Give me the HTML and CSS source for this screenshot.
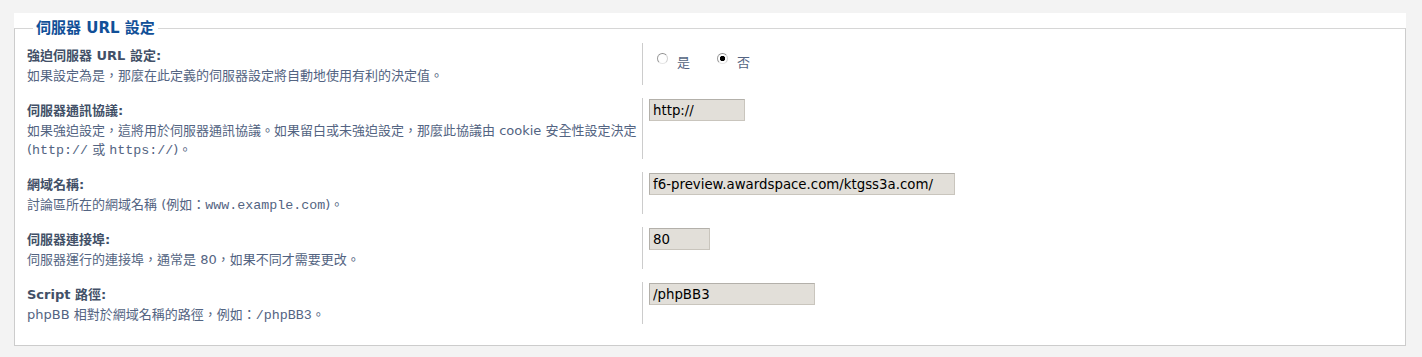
FILE: index.html
```html
<!DOCTYPE html>
<html lang="zh-TW">
<head>
    <meta charset="UTF-8">
    <title>伺服器 URL 設定</title>
    <link rel="stylesheet" href="styles.css">
</head>
<body>
    <div class="panel">
        <fieldset>
            <legend>伺服器 URL 設定</legend>

            <dl>
                <dt>
                    <label>強迫伺服器 URL 設定:</label>
                    <span class="explain">如果設定為是，那麼在此定義的伺服器設定將自動地使用有利的決定值。</span>
                </dt>
                <dd>
                    <div class="radios">
                        <label class="opt"><input type="radio" name="force_server_vars" value="1"><span>是</span></label>
                        <label class="opt"><input type="radio" name="force_server_vars" value="0" checked><span>否</span></label>
                    </div>
                </dd>
            </dl>

            <dl>
                <dt>
                    <label>伺服器通訊協議:</label>
                    <span class="explain">如果強迫設定，這將用於伺服器通訊協議。如果留白或未強迫設定，那麼此協議由 cookie 安全性設定決定 (<code>http://</code> 或 <code>https://</code>)。</span>
                </dt>
                <dd><input type="text" class="field w-protocol" value="http://"></dd>
            </dl>

            <dl>
                <dt>
                    <label>網域名稱:</label>
                    <span class="explain">討論區所在的網域名稱 (例如：<code>www.example.com</code>)。</span>
                </dt>
                <dd><input type="text" class="field w-name" value="f6-preview.awardspace.com/ktgss3a.com/"></dd>
            </dl>

            <dl>
                <dt>
                    <label>伺服器連接埠:</label>
                    <span class="explain">伺服器運行的連接埠，通常是 80，如果不同才需要更改。</span>
                </dt>
                <dd><input type="text" class="field w-port" value="80"></dd>
            </dl>

            <dl>
                <dt>
                    <label>Script 路徑:</label>
                    <span class="explain">phpBB 相對於網域名稱的路徑，例如：<code>/phpBB3</code>。</span>
                </dt>
                <dd><input type="text" class="field w-path" value="/phpBB3"></dd>
            </dl>
        </fieldset>
    </div>
</body>
</html>
```

FILE: styles.css
```css
body {
    margin: 0;
    padding: 13px 16px 0 14px;
    background-color: #f3f3f3;
    font-family: "DejaVu Sans", "Noto Sans CJK TC", sans-serif;
    font-size: 13px;
    color: #536482;
}
.panel {
    background-color: #fff;
    padding-top: 7px;
}
fieldset {
    margin: 0;
    padding: 6px 12px 8px 12px;
    border: 1px solid #cccccc;
    border-top-color: #d6d6d6;
}
legend {
    margin-left: 6px;
    padding: 0 3px;
    font-size: 15px;
    line-height: 17px;
    font-weight: bold;
    color: #115098;
}
dl {
    display: flex;
    margin: 0 0 13px 0;
}
dt {
    width: 615px;
    flex: none;
    padding: 3px 0 0 0;
}
dt label {
    display: block;
    font-weight: bold;
    line-height: 20px;
    color: #425067;
}
.explain {
    display: block;
    line-height: 19px;
}
code {
    font-family: "Liberation Mono", "Noto Sans CJK TC", monospace;
    font-size: 13.33px;
    line-height: 1;
    color: #536482;
}
dd {
    flex: 1;
    margin: 0;
    padding: 1px 6px;
    border-left: 1px solid #cccccc;
}
.field {
    box-sizing: border-box;
    height: 22px;
    margin: 0;
    padding: 0 3px;
    border: 1px solid #c9c5bd;
    border-top-color: #b3b0aa;
    border-left-color: #b3b0aa;
    background-color: #e2dfd9;
    font-family: "DejaVu Sans", sans-serif;
    font-size: 13.33px;
    color: #000;
}
.w-protocol { width: 96px; }
.w-name { width: 306px; }
.w-port { width: 61px; }
.w-path { width: 166px; }
.radios {
    display: flex;
    padding: 9px 0 0 8px;
}
.opt {
    display: flex;
    align-items: flex-start;
    margin-right: 27px;
    color: #536482;
}
.opt span {
    margin-top: 2px;
    line-height: 15px;
}
.opt input {
    appearance: none;
    -webkit-appearance: none;
    box-sizing: border-box;
    width: 11px;
    height: 11px;
    margin: 0 9px 0 0;
    border: 1px solid;
    border-color: #8f8f8f #d2d2d2 #e6e6e6 #9c9c9c;
    border-radius: 50%;
    background-color: #fff;
}
.opt input:checked {
    background: radial-gradient(circle, #000 0, #000 2.3px, #fff 3px);
}
```
